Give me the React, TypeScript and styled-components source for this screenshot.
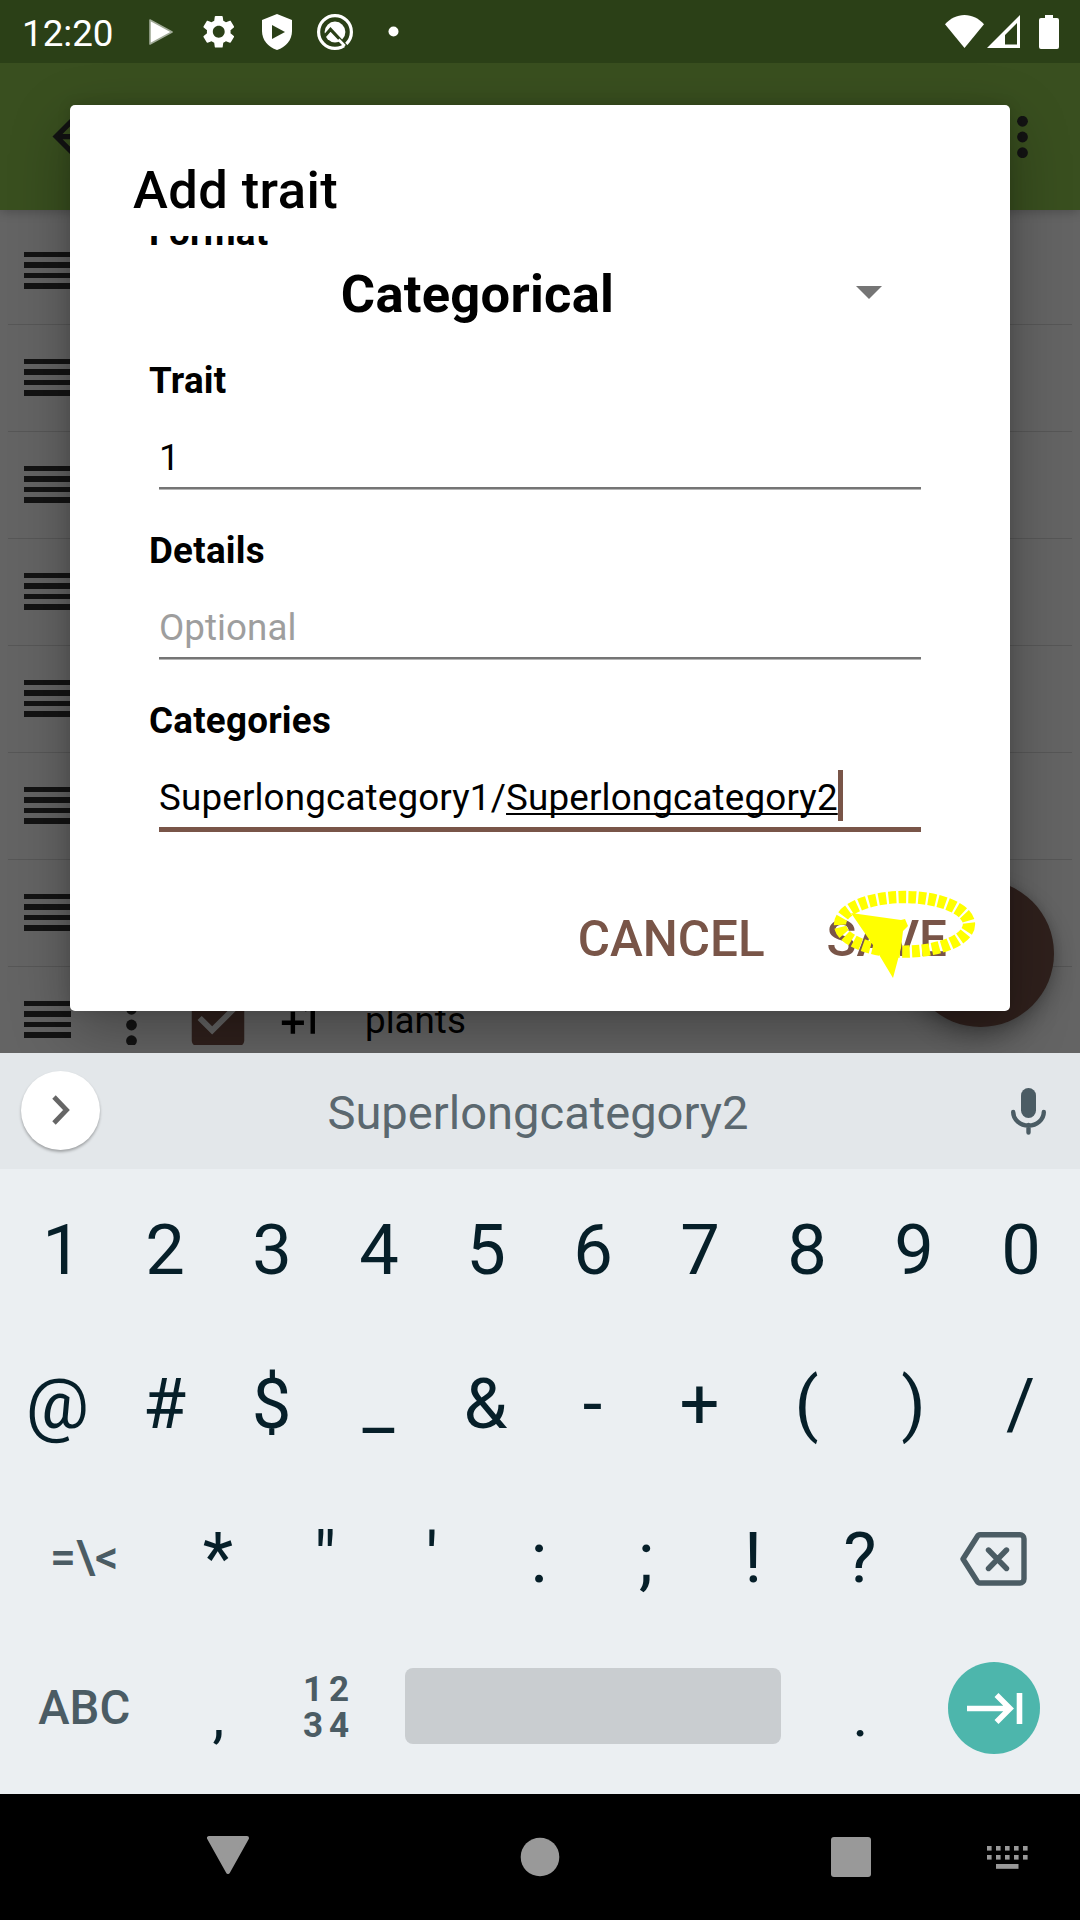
import React from "react";
import styled, { createGlobalStyle, css } from "styled-components";

const Global = createGlobalStyle`
  * { box-sizing: border-box; }
  html, body { margin: 0; padding: 0; }
  body { font-family: Roboto, "Noto Sans", sans-serif; background: #000; }
  svg { display: block; flex: none; }
`;

const Screen = styled.div`
  position: relative;
  width: 1080px;
  height: 1920px;
  overflow: hidden;
  display: flex;
  flex-direction: column;
`;

/* ---------- status bar ---------- */
const StatusBar = styled.header`
  height: 63px;
  flex: none;
  display: flex;
  align-items: center;
  padding: 0 21px 0 22px;
  background: #2b4017;
  color: #fff;
`;
const Clock = styled.div`
  width: 110px;
  font-size: 36.75px;
  line-height: 43px;
  padding-top: 3px;
`;
const NoticeSlot = styled.div`
  width: 58px;
  display: flex;
  justify-content: center;
`;
const SystemIcons = styled.div`
  margin-left: auto;
  display: flex;
  align-items: center;
  & > :nth-child(2) { margin-left: 3px; }
  & > :nth-child(3) { margin-left: 19px; }
`;

/* ---------- app behind the dialog ---------- */
const Workspace = styled.main`
  position: relative;
  height: 990px;
  flex: none;
  overflow: hidden;
  display: flex;
  flex-direction: column;
  background: #646464;
`;
const Toolbar = styled.div`
  height: 147px;
  flex: none;
  display: flex;
  align-items: center;
  justify-content: space-between;
  padding: 0 52px 0 42px;
  background: #394f1f;
  box-shadow: 0 2px 10px rgba(0, 0, 0, 0.22);
`;
const TraitList = styled.ul`
  list-style: none;
  margin: 8px;
  padding: 0;
  flex: 1;
  min-height: 0;
  overflow: hidden;
`;
const TraitRow = styled.li`
  height: 107px;
  padding-left: 16px;
  display: flex;
  align-items: center;
  border-bottom: 1px solid #575757;
`;
const Handle = styled.div`
  width: 47px;
  height: 37px;
  margin-top: -2px;
  display: flex;
  flex-direction: column;
  justify-content: space-between;
`;
const HandleBar = styled.span`
  height: 5.5px;
  background: #131313;
`;
const RowDots = styled.div`
  margin-left: 55px;
  margin-top: 10px;
`;
const RowCheck = styled.div`
  margin-left: 46px;
`;
const RowCounter = styled.div`
  margin-left: 20px;
`;
const RowName = styled.span`
  margin-left: 39px;
  font-size: 36.75px;
  line-height: 43px;
  color: #000;
`;
const Fab = styled.div`
  position: absolute;
  right: 26px;
  bottom: 26px;
  width: 147px;
  height: 147px;
  border-radius: 50%;
  background: #2f201c;
  box-shadow: 0 10px 22px rgba(0, 0, 0, 0.28), 0 0 10px rgba(0, 0, 0, 0.12);
`;

/* ---------- dialog ---------- */
const Dialog = styled.section`
  position: absolute;
  left: 70px;
  top: 42px;
  width: 940px;
  height: 906px;
  border-radius: 5px;
  background: #fff;
  box-shadow: 0 20px 60px rgba(0, 0, 0, 0.3), 0 0 14px rgba(0, 0, 0, 0.12);
  display: flex;
  flex-direction: column;
  color: #000;
`;
const DialogTitle = styled.h1`
  margin: 0;
  height: 131px;
  flex: none;
  padding: 54px 63px 0;
  font-size: 52.5px;
  line-height: 62px;
  font-weight: 500;
  letter-spacing: 0.42px;
`;
const DialogBody = styled.div`
  height: 633px;
  flex: none;
  overflow: hidden;
  padding: 0 79px;
`;
const Label = styled.div<{ $scrolled?: boolean }>`
  font-size: 36.75px;
  line-height: 43px;
  font-weight: 700;
  letter-spacing: 0.24px;
  ${(p) => p.$scrolled && css`margin-top: -25px;`}
`;
const Spinner = styled.div`
  height: 80px;
  margin-bottom: 25px;
  display: flex;
  align-items: center;
`;
const SpinnerValue = styled.div`
  width: 657px;
  text-align: center;
  font-size: 52.5px;
  line-height: 62px;
  font-weight: 700;
  letter-spacing: 0.24px;
`;
const SpinnerArrow = styled.div`
  margin: -3px 0 0 49.5px;
`;
const Field = styled.div`
  height: 170px;
`;
const Input = styled.div<{ $active?: boolean; $hint?: boolean }>`
  width: 762px;
  margin-left: 10px;
  padding: 34px 0 8px;
  display: flex;
  font-size: 36.75px;
  line-height: 43px;
  letter-spacing: ${(p) => (p.$hint ? 0.05 : 0.17)}px;
  color: ${(p) => (p.$hint ? "#9e9e9e" : "#000")};
  ${(p) =>
    p.$active
      ? css`border-bottom: 5px solid #795548;`
      : css`border-bottom: 2px solid #757575; box-shadow: 0 1px 0 #b5b5b5;`}
`;
const Composing = styled.span`
  text-decoration: underline;
  text-decoration-thickness: 2px;
  text-underline-offset: 3px;
  text-decoration-skip-ink: none;
`;
const Caret = styled.span`
  width: 5px;
  height: 51px;
  margin: -6px 0 -2px;
  background: #795548;
`;
const DialogActions = styled.div`
  flex: 1;
  display: flex;
  align-items: center;
  justify-content: flex-end;
  gap: 62px;
  padding: 0 63px 2px 0;
`;
const ActionButton = styled.button`
  border: 0;
  padding: 0;
  background: none;
  font-family: inherit;
  font-size: 49.4px;
  line-height: 60px;
  font-weight: 500;
  color: #795548;
`;

/* ---------- keyboard ---------- */
const Keyboard = styled.section`
  height: 741px;
  flex: none;
  display: flex;
  flex-direction: column;
  background: #ebeff2;
  color: #061f29;
`;
const SuggestionStrip = styled.div`
  height: 116px;
  flex: none;
  display: flex;
  align-items: center;
  justify-content: space-between;
  padding: 0 34px 0 21px;
  background: #e3e7ea;
`;
const ExpandButton = styled.div`
  width: 79px;
  height: 79px;
  margin-top: -2px;
  border-radius: 50%;
  background: #fff;
  box-shadow: 0 2px 3px rgba(0, 0, 0, 0.3);
  display: flex;
  align-items: center;
  justify-content: center;
`;
const Suggestion = styled.div`
  margin: 3px 0 0 -35px;
  font-size: 47.1px;
  line-height: 56px;
  color: #5b686f;
`;
const KeyRow = styled.div`
  height: 154px;
  flex: none;
  display: flex;
  padding: 0 4px;
`;
const Key = styled.div<{ $span?: number; $nudge?: number }>`
  width: ${(p) => (p.$span ?? 1) * 107}px;
  flex: none;
  height: 154px;
  padding: 8px 0 0 ${(p) => p.$nudge ?? 0}px;
  display: flex;
  align-items: center;
  justify-content: center;
  font-size: 70.5px;
  line-height: 84px;
`;
const PunctuationKey = styled(Key)`
  padding-top: 15px;
  padding-left: 1px;
  font-size: 60px;
`;
const FunctionKey = styled(Key)<{ $size: number; $drop?: number; $bold?: boolean }>`
  padding-top: ${(p) => p.$drop ?? 0}px;
  font-size: ${(p) => p.$size}px;
  font-weight: ${(p) => (p.$bold ? 700 : 500)};
  color: #4b5c64;
`;
const NumberPad = styled.span`
  display: grid;
  grid-template-columns: 26px 26px;
  line-height: 36px;
  text-align: center;
`;
const SpaceBar = styled.div`
  width: 376px;
  height: 76px;
  margin-top: -13px;
  border-radius: 8px;
  background: #c9cdd0;
`;
const EnterCircle = styled.div`
  width: 92px;
  height: 92px;
  margin-top: -9px;
  border-radius: 50%;
  background: #4db6ac;
`;

/* ---------- navigation bar ---------- */
const NavBar = styled.nav`
  height: 126px;
  flex: none;
  display: flex;
  align-items: center;
  padding-left: 72px;
  background: #000;
`;
const NavSlot = styled.div<{ $width: number }>`
  width: ${(p) => p.$width}px;
  display: flex;
  justify-content: center;
`;

const Pointer = styled.svg`
  position: absolute;
  left: 820px;
  top: 880px;
`;

const Dots = ({ height = 42 }: { height?: number }) => (
  <svg width="11" height={height} viewBox="0 0 11 42" fill="#131313">
    <circle cx="5.5" cy="5.3" r="5.4" />
    <circle cx="5.5" cy="21" r="5.4" />
    <circle cx="5.5" cy="36.7" r="5.4" />
  </svg>
);

const DragHandle = () => (
  <Handle>
    <HandleBar />
    <HandleBar />
    <HandleBar />
    <HandleBar />
  </Handle>
);

const digits = ["1", "2", "3", "4", "5", "6", "7", "8", "9", "0"];
const symbols = ["@", "#", "$", "_", "&", "-", "+", "(", ")", "/"];
const marks = ["*", '"', "'", ":", ";", "!", "?"];

export default function App() {
  return (
    <Screen>
      <Global />
      <StatusBar>
        <Clock>12:20</Clock>
        <NoticeSlot>
          <svg width="24" height="26" viewBox="0 0 24 26">
            <path d="M1 1 23 13 1 25z" fill="#fff" stroke="#a0aa97" strokeWidth="1.6" strokeLinejoin="round" />
          </svg>
        </NoticeSlot>
        <NoticeSlot>
          <svg width="39.5" height="39.5" viewBox="0 0 24 24" fill="#fff">
            <path d="M19.14 12.94c.04-.3.06-.61.06-.94 0-.32-.02-.64-.07-.94l2.03-1.58c.18-.14.23-.41.12-.61l-1.92-3.32c-.12-.22-.37-.29-.59-.22l-2.39.96c-.5-.38-1.03-.7-1.62-.94l-.36-2.54c-.04-.24-.24-.41-.48-.41h-3.84c-.24 0-.43.17-.47.41l-.36 2.54c-.59.24-1.13.57-1.62.94l-2.39-.96c-.22-.08-.47 0-.59.22L2.74 8.87c-.12.21-.08.47.12.61l2.03 1.58c-.05.3-.09.63-.09.94s.02.64.07.94l-2.03 1.58c-.18.14-.23.41-.12.61l1.92 3.32c.12.22.37.29.59.22l2.39-.96c.5.38 1.03.7 1.62.94l.36 2.54c.05.24.24.41.48.41h3.84c.24 0 .44-.17.47-.41l.36-2.54c.59-.24 1.13-.56 1.62-.94l2.39.96c.22.08.47 0 .59-.22l1.92-3.32c.12-.22.07-.47-.12-.61l-2.01-1.58zM12 15.6c-1.98 0-3.6-1.62-3.6-3.6s1.62-3.6 3.6-3.6 3.6 1.62 3.6 3.6-1.62 3.6-3.6 3.6z" />
          </svg>
        </NoticeSlot>
        <NoticeSlot>
          <svg width="30" height="36" viewBox="0 0 30 36">
            <path d="M15 0 30 6v11c0 9-6 16-15 19C6 33 0 26 0 17V6z" fill="#fff" />
            <path d="M10 11v14l13-7z" fill="#2b4017" />
          </svg>
        </NoticeSlot>
        <NoticeSlot>
          <svg width="38" height="38" viewBox="-19 -19 38 38" fill="none">
            <circle r="16.4" stroke="#fff" strokeWidth="3.2" />
            <circle r="10.4" fill="#fff" />
            <path d="M-12 6-4.5-2.6 13 16" stroke="#2b4017" strokeWidth="3.2" />
            <path d="M3.5 7.5 9.8 14" stroke="#fff" strokeWidth="2.6" />
          </svg>
        </NoticeSlot>
        <NoticeSlot>
          <svg width="11" height="11" viewBox="0 0 11 11">
            <circle cx="5.5" cy="5.5" r="5" fill="#fff" />
          </svg>
        </NoticeSlot>
        <SystemIcons>
          <svg width="39" height="33" viewBox="0 0 39 33" fill="#fff">
            <path d="M0 9.3C5 3.5 12 0 19.500 0S34 3.500 39 9.300L19.500 33z" />
          </svg>
          <svg width="33" height="33" viewBox="0 0 33 33" fill="#fff">
            <path fillRule="evenodd" d="M33 0V33H0zM30 8 18 20V29.500H30z" />
          </svg>
          <svg width="20" height="34" viewBox="0 0 20 34" fill="#fff">
            <path d="M6 0h8v3h4a2 2 0 0 1 2 2v27a2 2 0 0 1-2 2H2a2 2 0 0 1-2-2V5a2 2 0 0 1 2-2h4z" />
          </svg>
        </SystemIcons>
      </StatusBar>

      <Workspace>
        <Toolbar>
          <svg width="63" height="63" viewBox="0 0 24 24" fill="#131313">
            <path d="M20 11H7.830l5.590-5.590L12 4l-8 8 8 8 1.410-1.410L7.830 13H20z" />
          </svg>
          <Dots />
        </Toolbar>
        <TraitList>
          {[0, 1, 2, 3, 4, 5, 6].map((i) => (
            <TraitRow key={i}>
              <DragHandle />
            </TraitRow>
          ))}
          <TraitRow>
            <DragHandle />
            <RowDots>
              <Dots />
            </RowDots>
            <RowCheck>
              <svg width="70" height="70" viewBox="0 0 24 24" fill="#2f201c">
                <path d="M19 3H5c-1.110 0-2 .9-2 2v14c0 1.100.89 2 2 2h14c1.110 0 2-.9 2-2V5c0-1.100-.89-2-2-2zm-9 14-5-5 1.410-1.410L10 14.170l7.590-7.590L19 8l-9 9z" />
              </svg>
            </RowCheck>
            <RowCounter>
              <svg width="53" height="53" viewBox="0 0 24 24" fill="#000">
                <path d="M10 8H8v4H4v2h4v4h2v-4h4v-2h-4zm4.500-1.920V7.900l2.500-.5V18h2V5z" />
              </svg>
            </RowCounter>
            <RowName>plants</RowName>
          </TraitRow>
        </TraitList>
        <Fab />

        <Dialog>
          <DialogTitle>Add trait</DialogTitle>
          <DialogBody>
            <Label $scrolled>Format</Label>
            <Spinner>
              <SpinnerValue>Categorical</SpinnerValue>
              <SpinnerArrow>
                <svg width="26" height="13" viewBox="0 0 26 13">
                  <path d="M0 0h26L13 13z" fill="#757575" />
                </svg>
              </SpinnerArrow>
            </Spinner>
            <Field>
              <Label>Trait</Label>
              <Input>1</Input>
            </Field>
            <Field>
              <Label>Details</Label>
              <Input $hint>Optional</Input>
            </Field>
            <Field>
              <Label>Categories</Label>
              <Input $active>
                Superlongcategory1/<Composing>Superlongcategory2</Composing>
                <Caret />
              </Input>
            </Field>
          </DialogBody>
          <DialogActions>
            <ActionButton>CANCEL</ActionButton>
            <ActionButton>SAVE</ActionButton>
          </DialogActions>
        </Dialog>
      </Workspace>

      <Keyboard>
        <SuggestionStrip>
          <ExpandButton>
            <svg width="20" height="32" viewBox="0 0 20 32">
              <path d="M3 3 15.500 16 3 29" fill="none" stroke="#666" strokeWidth="4.800" />
            </svg>
          </ExpandButton>
          <Suggestion>Superlongcategory2</Suggestion>
          <svg width="35" height="47" viewBox="0 0 35 47">
            <rect x="10" y="0" width="15" height="30" rx="7.500" fill="#4b5c64" />
            <path d="M2.200 24a15.300 13.500 0 0 0 30.600 0M17.500 37v7.500" fill="none" stroke="#4b5c64" strokeWidth="4.400" strokeLinecap="round" />
          </svg>
        </SuggestionStrip>
        <KeyRow>
          {digits.map((d) => (
            <Key key={d} $nudge={d === "1" ? 9 : 1}>{d}</Key>
          ))}
        </KeyRow>
        <KeyRow>
          {symbols.map((s) => (
            <Key key={s}>{s}</Key>
          ))}
        </KeyRow>
        <KeyRow>
          <FunctionKey $span={1.5} $size={46} $drop={6}>=\&lt;</FunctionKey>
          {marks.map((m) => (
            <Key key={m}>{m}</Key>
          ))}
          <FunctionKey $span={1.5} $size={42} $drop={9}>
            <svg width="67" height="54" viewBox="0 0 67 54" fill="none" stroke="#4b5c64" strokeWidth="5.400" strokeLinejoin="round" strokeLinecap="round">
              <path d="M20 2.700H60a4 4 0 0 1 4 4V47a4 4 0 0 1-4 4H20q-2 0-3-2L3 27 17 5q1-2.300 3-2.300zM28.500 18l18 18.500M46.500 18l-18 18.500" />
            </svg>
          </FunctionKey>
        </KeyRow>
        <KeyRow>
          <FunctionKey $span={1.5} $size={47.25}>ABC</FunctionKey>
          <PunctuationKey>,</PunctuationKey>
          <FunctionKey $size={35} $bold $nudge={2}>
            <NumberPad>
              <span>1</span>
              <span>2</span>
              <span>3</span>
              <span>4</span>
            </NumberPad>
          </FunctionKey>
          <Key $span={4}>
            <SpaceBar />
          </Key>
          <PunctuationKey>.</PunctuationKey>
          <Key $span={1.5}>
            <EnterCircle>
              <svg width="92" height="92" viewBox="0 0 92 92" fill="none" stroke="#fff" strokeWidth="5.600">
                <path d="M19 46.500H61M48.500 33 62 46.500 48.500 60M71.500 31V62" />
              </svg>
            </EnterCircle>
          </Key>
        </KeyRow>
      </Keyboard>

      <NavBar>
        <NavSlot $width={312}>
          <svg width="42" height="42" viewBox="0 0 42 42" fill="#999" stroke="#999" strokeWidth="4" strokeLinejoin="round">
            <path d="M2 2H40L21 36z" />
          </svg>
        </NavSlot>
        <NavSlot $width={312}>
          <svg width="40" height="40" viewBox="0 0 40 40" fill="#999">
            <circle cx="20" cy="20" r="19.300" />
          </svg>
        </NavSlot>
        <NavSlot $width={310}>
          <svg width="40" height="40" viewBox="0 0 40 40" fill="#999">
            <rect width="40" height="40" rx="3" />
          </svg>
        </NavSlot>
        <NavSlot $width={3}>
          <svg width="41" height="23" viewBox="0 0 41 23" fill="#999">
            {[0, 1, 2, 3, 4].map((c) => (
              <React.Fragment key={c}>
                <rect x={c * 9} y="0" width="4.600" height="4.600" />
                <rect x={c * 9} y="9" width="4.600" height="4.600" />
              </React.Fragment>
            ))}
            <rect x="9" y="18" width="22.500" height="4.800" />
          </svg>
        </NavSlot>
      </NavBar>

      <Pointer width="170" height="110" viewBox="0 0 170 110">
        <ellipse cx="84.500" cy="44.300" rx="64.500" ry="27.300" fill="none" stroke="#ff0" strokeWidth="12.300" strokeDasharray="7.700 2.250" />
        <path d="M31 33 81 40 85 39 88 46 83 51 81 68 73 98 55 68z" fill="#ff0" />
      </Pointer>
    </Screen>
  );
}
